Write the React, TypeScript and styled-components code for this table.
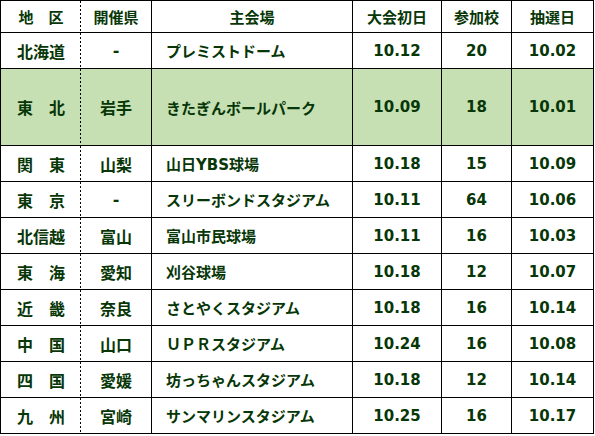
import React, { FC } from 'react';
import styled, { createGlobalStyle, css } from 'styled-components';

type Row = {
  area: string;
  pref: string;
  venue: string;
  start: string;
  schools: string;
  draw: string;
  highlight?: boolean;
};

const rows: Row[] = [
  { area: '北海道', pref: '-', venue: 'プレミストドーム', start: '10.12', schools: '20', draw: '10.02' },
  { area: '東　北', pref: '岩手', venue: 'きたぎんボールパーク', start: '10.09', schools: '18', draw: '10.01', highlight: true },
  { area: '関　東', pref: '山梨', venue: '山日YBS球場', start: '10.18', schools: '15', draw: '10.09' },
  { area: '東　京', pref: '-', venue: 'スリーボンドスタジアム', start: '10.11', schools: '64', draw: '10.06' },
  { area: '北信越', pref: '富山', venue: '富山市民球場', start: '10.11', schools: '16', draw: '10.03' },
  { area: '東　海', pref: '愛知', venue: '刈谷球場', start: '10.18', schools: '12', draw: '10.07' },
  { area: '近　畿', pref: '奈良', venue: 'さとやくスタジアム', start: '10.18', schools: '16', draw: '10.14' },
  { area: '中　国', pref: '山口', venue: 'ＵＰＲスタジアム', start: '10.24', schools: '16', draw: '10.08' },
  { area: '四　国', pref: '愛媛', venue: '坊っちゃんスタジアム', start: '10.18', schools: '12', draw: '10.14' },
  { area: '九　州', pref: '宮崎', venue: 'サンマリンスタジアム', start: '10.25', schools: '16', draw: '10.17' },
];

const widths = [80, 71, 201, 89, 70, 82];

const GlobalStyle = createGlobalStyle`
  body {
    margin: 0;
    background: #ffffff;
  }
`;

const TableSC = styled.table`
  border-collapse: separate;
  border-spacing: 0;
  table-layout: fixed;
  width: 594px;
  border-top: 1px solid #000;
  border-left: 1px solid #000;
  font-family: 'DejaVu Sans', 'Noto Sans CJK JP', sans-serif;
  font-weight: bold;
  color: #073607;
`;

const RowSC = styled.tr<{ $tall?: boolean; $green?: boolean }>`
  height: ${(p) => (p.$tall ? 77 : 36)}px;
  background: ${(p) => (p.$green ? '#c6e0b4' : '#ffffff')};
`;

const HeadRowSC = styled.tr`
  height: 32px;
`;

// dashed divider after the area column: 2px on, 2px off
const dashedEdge = css`
  border-right: none;
  background-image: linear-gradient(#000 50%, transparent 50%);
  background-size: 1px 4px;
  background-position: right top;
  background-repeat: repeat-y;
`;

const CellSC = styled.td<{ $dotted?: boolean; $left?: boolean; $size?: number }>`
  box-sizing: border-box;
  padding: ${(p) => (p.$left ? '0 0 0 14px' : '0')};
  border-right: 1px solid #000;
  border-bottom: 1px solid #000;
  text-align: ${(p) => (p.$left ? 'left' : 'center')};
  vertical-align: middle;
  font-size: ${(p) => p.$size ?? 15}px;
  white-space: nowrap;
  overflow: hidden;
  ${(p) => p.$dotted && dashedEdge}
`;

const HeadCellSC = styled(CellSC).attrs({ as: 'th' })`
  font-weight: bold;
`;

const App: FC = () => {
  const heads = ['地　区', '開催県', '主会場', '大会初日', '参加校', '抽選日'];

  return (
    <>
      <GlobalStyle />
      <TableSC>
        <colgroup>
          {widths.map((w, i) => (
            <col key={i} style={{ width: w }} />
          ))}
        </colgroup>
        <thead>
          <HeadRowSC>
            {heads.map((h, i) => (
              <HeadCellSC key={h} $dotted={i === 0} $size={15}>
                {h}
              </HeadCellSC>
            ))}
          </HeadRowSC>
        </thead>
        <tbody>
          {rows.map((r) => (
            <RowSC key={r.area} $tall={r.highlight} $green={r.highlight}>
              <CellSC $dotted $size={16}>{r.area}</CellSC>
              <CellSC $size={16}>{r.pref}</CellSC>
              <CellSC $left>{r.venue}</CellSC>
              <CellSC>{r.start}</CellSC>
              <CellSC>{r.schools}</CellSC>
              <CellSC>{r.draw}</CellSC>
            </RowSC>
          ))}
        </tbody>
      </TableSC>
    </>
  );
};

export default App;
